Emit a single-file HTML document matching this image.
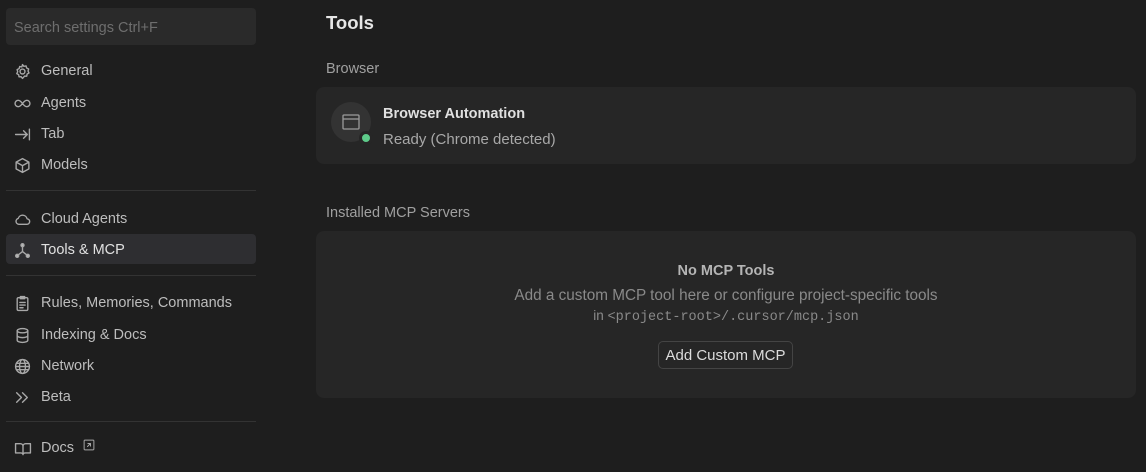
<!DOCTYPE html>
<html><head><style>
*{box-sizing:border-box;margin:0;padding:0}
body{width:1146px;height:472px;background:#1e1e1e;font-family:"Liberation Sans",sans-serif;color:#ccc;position:relative;overflow:hidden;font-size:14.5px}
.search{position:absolute;left:6px;top:8px;width:250px;height:37px;background:#2a2a2a;border-radius:4px;color:#6e6e6e;font-size:14.5px;padding:12px 8px}
.item{position:absolute;left:6px;width:250px;height:30px;display:flex;align-items:center;padding-left:8px;padding-top:2px;color:#bdbdbd;font-size:14.5px}
.item svg{width:17px;height:17px;margin-right:10px;fill:none;stroke:#a8a8a8;stroke-width:1.3;stroke-linecap:round;stroke-linejoin:round}
.active{background:#2e2e31;border-radius:4px;color:#e0e0e0}
.div{position:absolute;left:6px;width:250px;height:1px;background:#333}
.abs{position:absolute}
.card{position:absolute;left:316px;width:820px;background:#262626;border-radius:8px}
</style></head><body>
<div class="search">Search settings Ctrl+F</div>
<div class="item" style="top:55px"><svg viewBox="0 0 16 16"><circle cx="8" cy="8" r="2.3"/><path d="M8 1.5l1.3 1.6 2-.4.6 2 1.9.9-.6 2 .9 1.8-1.8 1-.3 2-2-.1L8 14.5l-1.3-1.6-2 .1-.3-2-1.8-1 .9-1.8-.6-2 1.9-.9.6-2 2 .4z"/></svg>General</div>
<div class="item" style="top:87px"><svg viewBox="0 0 16 16"><path d="M8 8c-1.5-2-2.5-3-4-3a3 3 0 000 6c1.5 0 2.5-1 4-3s2.5-3 4-3a3 3 0 010 6c-1.5 0-2.5-1-4-3z"/></svg>Agents</div>
<div class="item" style="top:118px"><svg viewBox="0 0 16 16"><path d="M1.5 8h11M9 4.5L12.5 8 9 11.5M14.5 3v10"/></svg>Tab</div>
<div class="item" style="top:149px"><svg viewBox="0 0 16 16"><path d="M8 1.5l6 3.3v6.4l-6 3.3-6-3.3V4.8zM2 4.8l6 3.3 6-3.3M8 8.1v6.4"/></svg>Models</div>
<div class="div" style="top:190px"></div>
<div class="item" style="top:203px"><svg viewBox="0 0 16 16"><path d="M4.5 12.5h7.5a2.6 2.6 0 00.3-5.2A4.3 4.3 0 004 7a2.8 2.8 0 00.5 5.5z"/></svg>Cloud Agents</div>
<div class="item active" style="top:234px"><svg viewBox="0 0 16 16"><path d="M8 3v6M8 9l-4.5 3.5M8 9l4.5 3.5"/><circle cx="8" cy="3" r="1.4" fill="#bbb"/><circle cx="3" cy="13" r="1.4" fill="#bbb"/><circle cx="13" cy="13" r="1.4" fill="#bbb"/></svg>Tools &amp; MCP</div>
<div class="div" style="top:275px"></div>
<div class="item" style="top:287px"><svg viewBox="0 0 16 16"><rect x="3" y="2.5" width="10" height="12" rx="1.2"/><path d="M6 1.5h4v2H6zM5.5 7h5M5.5 9.5h5M5.5 12h3"/></svg>Rules, Memories, Commands</div>
<div class="item" style="top:319px"><svg viewBox="0 0 16 16"><ellipse cx="8" cy="3.5" rx="5" ry="2"/><path d="M3 3.5v9c0 1.1 2.2 2 5 2s5-.9 5-2v-9M3 8c0 1.1 2.2 2 5 2s5-.9 5-2"/></svg>Indexing &amp; Docs</div>
<div class="item" style="top:350px"><svg viewBox="0 0 16 16"><circle cx="8" cy="8" r="6.5"/><ellipse cx="8" cy="8" rx="2.8" ry="6.5"/><path d="M1.5 8h13M2.5 5h11M2.5 11h11"/></svg>Network</div>
<div class="item" style="top:381px"><svg viewBox="0 0 16 16"><path d="M2.5 3.5L7 8l-4.5 4.5M8 3.5L12.5 8 8 12.5"/></svg>Beta</div>
<div class="div" style="top:421px"></div>
<div class="item" style="top:432px"><svg viewBox="0 0 16 16" style="width:18px;margin-right:9px"><path d="M1 3.5h4.5c1.4 0 2.5 1 2.5 2.3v8c0-.9-1-1.6-2.2-1.6H1zM15 3.5h-4.5C9.1 3.5 8 4.5 8 5.8v8c0-.9 1-1.6 2.2-1.6H15z"/></svg>Docs<svg viewBox="0 0 16 16" style="width:12px;height:12px;margin-left:9px;margin-top:-6px"><rect x="1.5" y="1.5" width="13" height="13" rx="1"/><path d="M6 10l4-4M6.5 6H10v3.5"/></svg></div>

<div class="abs" style="left:326px;top:12px;font-size:18.5px;font-weight:bold;color:#e6e6e6">Tools</div>
<div class="abs" style="left:326px;top:61px;color:#a0a0a0">Browser</div>
<div class="card" style="top:87px;height:77px">
 <div class="abs" style="left:15px;top:15px;width:40px;height:40px;border-radius:50%;background:#333"></div>
 <svg class="abs" style="left:25px;top:25px" width="20" height="20" viewBox="0 0 20 20" fill="none" stroke="#9a9a9a" stroke-width="1.3"><rect x="2" y="3" width="16" height="14" rx="1"/><path d="M2 7h16"/></svg>
 <div class="abs" style="left:43px;top:44px;width:14px;height:14px;border-radius:50%;background:#5ecb8a;border:3px solid #262626"></div>
 <div class="abs" style="left:67px;top:19px;font-weight:bold;color:#e0e0e0">Browser Automation</div>
 <div class="abs" style="left:67px;top:44px;color:#a8a8a8;font-size:15px">Ready (Chrome detected)</div>
</div>
<div class="abs" style="left:326px;top:205px;color:#a0a0a0">Installed MCP Servers</div>
<div class="card" style="top:231px;height:167px;text-align:center">
 <div class="abs" style="left:0;width:820px;top:32px;font-weight:bold;color:#b5b5b5">No MCP Tools</div>
 <div class="abs" style="left:0;width:820px;top:56px;color:#8a8a8a;font-size:15.3px">Add a custom MCP tool here or configure project-specific tools</div>
 <div class="abs" style="left:0;width:820px;top:77px;color:#8a8a8a;font-size:13.5px">in <span style="font-family:'Liberation Mono',monospace">&lt;project-root&gt;/.cursor/mcp.json</span></div>
 <div class="abs" style="left:342px;top:110px;width:135px;height:28px;border:1px solid #444;border-radius:5px;color:#dcdcdc;line-height:28px;font-size:15px">Add Custom MCP</div>
</div>
</body></html>
